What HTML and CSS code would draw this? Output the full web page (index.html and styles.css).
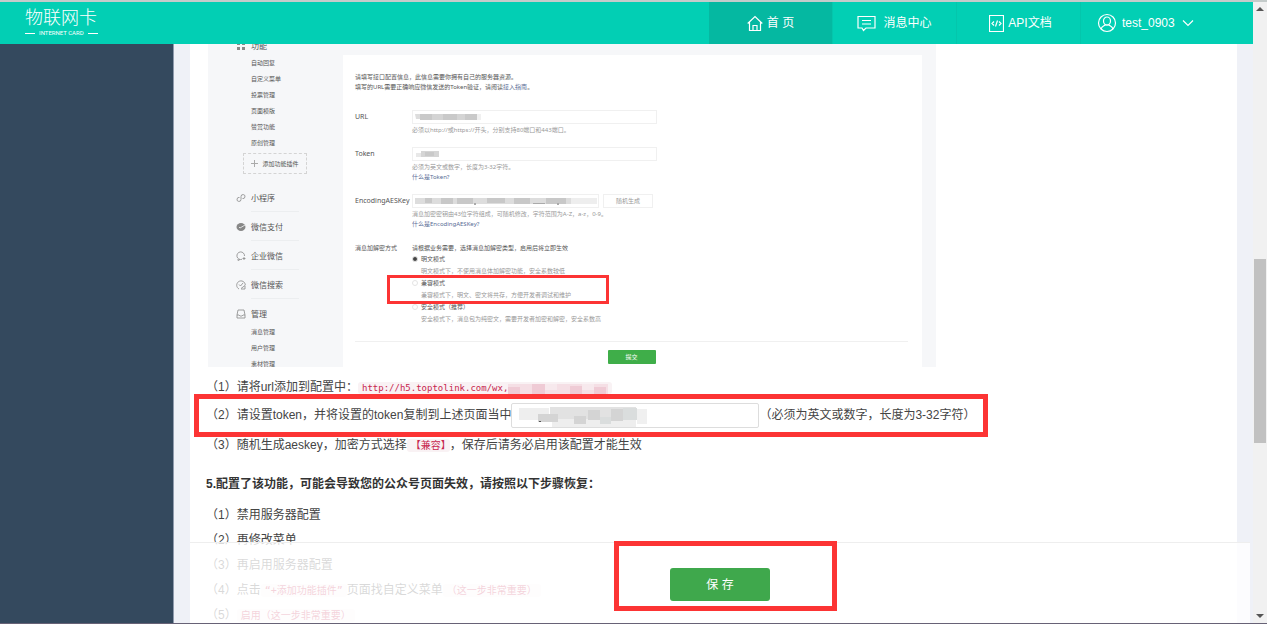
FILE: index.html
```html
<!DOCTYPE html>
<html lang="zh-CN">
<head>
<meta charset="utf-8">
<title>物联网卡</title>
<link rel="stylesheet" href="styles.css">
</head>
<body>
<div class="app">
  <header class="topbar">
    <a class="logo" href="#">
      <span class="logo-name">物联网卡</span>
      <span class="logo-sub">INTERNET CARD</span>
    </a>
    <nav class="nav">
      <a class="nav-item nav-active" href="#">
        <svg width="16" height="18" viewBox="0 0 16 18"><path d="M.7 9.500 8 2.500l7.300 7M2.500 8v8.500h11V8M6 16.500v-5h4v5"/></svg>
        <span>首 页</span>
      </a>
      <a class="nav-item nav-messages" href="#">
        <svg width="19" height="17" viewBox="0 0 19 17"><path d="M1 1.500h17v11.500H9l-2.500 2.500L5 13H1zM5 5.500h9M5 9h9"/></svg>
        <span>消息中心</span>
      </a>
      <a class="nav-item nav-api" href="#">
        <svg width="15" height="17" viewBox="0 0 15 17"><path d="M.5.5h14v16H.5zM5 6.500 3 8.500l2 2M10 6.500l2 2-2 2M8.500 5.500l-2 6"/></svg>
        <span>API文档</span>
      </a>
      <button class="nav-item nav-user" type="button">
        <svg width="20" height="20" viewBox="0 0 20 20"><circle cx="10" cy="10" r="8.500"/><ellipse cx="10" cy="8" rx="3.500" ry="4"/><path d="M4 16c1-3 3-3 4-4h4c1 1 3 1 4 4"/></svg>
        <span>test_0903</span>
        <svg class="chevron" width="12" height="8" viewBox="0 0 12 8"><path d="m1 1.500 5 5 5-5"/></svg>
      </button>
    </nav>
  </header>

  <aside class="sidebar"></aside>

  <main class="main">
    <div class="card">
      <div class="guide">
        <div class="menu">
          <div class="menu-head menu-first"><svg width="10" height="10" viewBox="0 0 10 10"><path class="solid" d="M1 1h3v3H1zM6 1h3v3H6zM1 6h3v3H1zM6 6h3v3H6z"/></svg>功能</div>
          <ul class="menu-list">
            <li>自动回复</li><li>自定义菜单</li><li>投票管理</li><li>页面模版</li><li>赞赏功能</li><li>原创管理</li>
          </ul>
          <button class="menu-add" type="button"><svg width="7" height="7" viewBox="0 0 7 7"><path d="M3.500 0v7M0 3.500h7"/></svg>添加功能插件</button>
          <div class="menu-head"><svg width="10" height="10" viewBox="0 0 10 10"><path d="M3.500 4.500a2 2 0 1 0 1.500 2V3.500a2 2 0 1 1 1.500 2"/></svg>小程序</div>
          <div class="menu-head"><svg width="10" height="10" viewBox="0 0 10 10"><ellipse class="solid" cx="5" cy="5" rx="4.500" ry="4"/><path class="tick" d="m3 5 1 1 5-3"/></svg>微信支付</div>
          <div class="menu-head"><svg width="10" height="10" viewBox="0 0 10 10"><path d="M6 8.300A3.800 3.800 0 1 1 8.500 5M2 8v1.500L4 8.500M6.500 7.500h3M8 6v3"/></svg>企业微信</div>
          <div class="menu-head"><svg width="10" height="10" viewBox="0 0 10 10"><path d="M3 9A4.300 4.300 0 1 1 9.300 5M3 4.500 4.500 6 7 3M5 8.500 9 5.500v3.500H5"/></svg>微信搜索</div>
          <div class="menu-head menu-last"><svg width="10" height="10" viewBox="0 0 10 10"><path d="M1 6 2 1h6l1 5v3H1zM1 6h2l1 1h2l1-1h2"/></svg>管理</div>
          <ul class="menu-list">
            <li>消息管理</li><li>用户管理</li><li>素材管理</li>
          </ul>
        </div>

        <form class="panel">
          <p class="intro">请填写接口配置信息，此信息需要你拥有自己的服务器资源。<br>填写的URL需要正确响应微信发送的Token验证，请阅读<a href="#">接入指南</a>。</p>
          <div class="field">
            <label class="latin" for="cfg-url">URL</label>
            <div>
              <span class="masked"><input class="box" id="cfg-url" type="text"><svg class="mask" width="72" height="12" viewBox="0 0 72 12"><path fill="#ddd" d="M2 3h5v5H3z"/><path fill="#c9c9c9" d="M7 3h12v6H7zM30 3h14v6H30zM52 3h12v6H52z"/><path fill="#d4d4d4" d="M19 3h11v6H19zM44 3h8v6h-8z"/><path fill="#f0f0f0" d="M64 3h4v6h-4z"/></svg></span>
              <p>必须以http://或https://开头，分别支持80端口和443端口。</p>
            </div>
          </div>
          <div class="field">
            <label class="latin" for="cfg-token">Token</label>
            <div>
              <span class="masked"><input class="box" id="cfg-token" type="text"><svg class="mask" width="72" height="12" viewBox="0 0 72 12"><path fill="#e8e8e8" d="M3 5h5v4H3z"/><path fill="#d5d5d5" d="M8 3h18v6H8z"/><path fill="#c9c9c9" d="M12 4h9v4h-9z"/></svg></span>
              <p>必须为英文或数字，长度为3-32字符。</p>
              <p><a href="#">什么是Token?</a></p>
            </div>
          </div>
          <div class="field">
            <label class="latin" for="cfg-key">EncodingAESKey</label>
            <div>
              <div class="key-row">
                <span class="masked"><input class="box" id="cfg-key" type="text"><svg class="mask" width="186" height="12" viewBox="0 0 186 12"><path fill="#ddd" d="M2 3h182v6H2z"/><path fill="#c8c8c8" d="M12 3h7v5h-7zM28 3h12v6H28zM44 3h16v6H44zM74 3h18v5H74zM101 3h16v6h-16zM133 3h20v6h-20z"/><path fill="#eee" d="M158 3h26v6h-26z"/><path fill="#aaa" d="M61 8h2v2h-2zM120 8h12v1h-12zM144 8h2v2h-2z"/></svg></span>
                <button class="random" type="button">随机生成</button>
              </div>
              <p>消息加密密钥由43位字符组成，可随机修改，字符范围为A-Z，a-z，0-9。</p>
              <p><a href="#">什么是EncodingAESKey?</a></p>
            </div>
          </div>
          <div class="field modes">
            <span>消息加解密方式</span>
            <div>
              <p class="dark">请根据业务需要，选择消息加解密类型，启用后将立即生效</p>
              <label class="mode"><input type="radio" name="mode" checked>明文模式</label>
              <p class="note">明文模式下，不使用消息体加解密功能，安全系数较低</p>
              <label class="mode"><input type="radio" name="mode">兼容模式</label>
              <p class="note">兼容模式下，明文、密文将共存，方便开发者调试和维护</p>
              <label class="mode"><input type="radio" name="mode">安全模式（推荐）</label>
              <p class="note">安全模式下，消息包为纯密文，需要开发者加密和解密，安全系数高</p>
            </div>
            <i class="mark mark-mode"></i>
          </div>
          <div class="panel-foot"><button class="submit" type="button">提交</button></div>
        </form>
      </div>

      <div class="steps">
        <p class="step">（1）请将url添加到配置中：<code class="url">http://h5.toptolink.com/wx,<svg width="100" height="12" viewBox="0 0 100 12"><path fill="#f5dfe5" d="M0 1h100v11H0z"/><path fill="#efcbd5" d="M0 4h12v8H0zM24 1h13v11H24zM62 3h12v9H62zM86 4h12v8H86z"/><path fill="#f7e9ed" d="M37 1h12v6H37zM74 1h12v6H74z"/></svg></code></p>
        <div class="step token-step">
          <label for="token">（2）请设置token，并将设置的token复制到上述页面当中</label>
          <span class="masked"><input class="token" id="token" type="text"><svg class="mask" width="140" height="25" viewBox="0 0 140 25"><path fill="#eee" d="M7 4h30v12H7zM40 13h84v10H40z"/><path fill="#e2e2e2" d="M38 3h86v12H38z"/><path fill="#d4d4d4" d="M26 10h20v8H26zM62 12h12v8H62zM76 6h12v10H76zM99 5h12v12H99z"/><path fill="#dadddd" d="M111 4h14v12h-14zM88 13h11v7H88z"/><path fill="#f0f0f0" d="M125 5h10v15h-10z"/><path fill="#555" d="M27 17h2v1h-2z"/></svg></span>
          <span>（必须为英文或数字，长度为3-32字符）</span>
          <i class="mark mark-token"></i>
        </div>
        <p class="step">（3）随机生成aeskey，加密方式选择<code>【兼容】</code>，保存后请务必启用该配置才能生效</p>
        <h2 class="title">5.配置了该功能，可能会导致您的公众号页面失效，请按照以下步骤恢复：</h2>
        <p class="step">（1）禁用服务器配置</p>
        <p class="step">（2）再修改菜单</p>
        <p class="step">（3）再启用服务器配置</p>
        <p class="step">（4）点击<code>“+添加功能插件”</code>页面找自定义菜单<code>（这一步非常重要）</code></p>
        <p class="step">（5）<code>启用（这一步非常重要）</code></p>
      </div>
    </div>
    <div class="savebar">
      <button class="save" type="button">保 存</button>
      <i class="mark mark-save"></i>
    </div>
  </main>

  <div class="scrollbar">
    <svg width="14" height="14" viewBox="0 0 14 14"><path d="m3 9 4-4 4 4z"/></svg>
    <div class="track"><div class="thumb"></div></div>
    <svg width="14" height="14" viewBox="0 0 14 14"><path d="m3 5 4 4 4-4z"/></svg>
  </div>
</div>
</body>
</html>
```
FILE: styles.css
```css
* { box-sizing: border-box; }
body {
  margin: 0;
  font: 12px/24px "Liberation Sans", "Noto Sans CJK SC", sans-serif;
  color: #444;
}
p, ul, h2 { margin: 0; padding: 0; list-style: none; }
a { color: inherit; text-decoration: none; }
button, input { font: inherit; color: inherit; margin: 0; padding: 0; }
svg { fill: none; stroke: currentColor; flex: none; }

.app {
  display: grid;
  grid-template: 42px minmax(0, 1fr) / 174px minmax(0, 1fr) 14px;
  height: 100vh;
  border-top: 2px solid #c4cbca;
  border-bottom: 1px solid #676276;
  overflow: hidden;
}

.topbar {
  grid-column: 1 / 3;
  display: flex;
  justify-content: space-between;
  background: #02cfb4;
  color: #fff;
}
.logo { padding: 5px 0 0 25px; }
.logo-name { display: block; font-size: 18px; line-height: 22px; font-weight: 300; }
.logo-sub { display: flex; align-items: center; gap: 4px; font: 6px/8px Roboto, sans-serif; }
.logo-sub::before, .logo-sub::after { content: ""; width: 10px; height: 1px; background: #fff; }
.nav { display: flex; }
.nav-item {
  display: flex;
  align-items: center;
  justify-content: center;
  gap: 4px;
  width: 124px;
  border: 0;
  border-right: 1px solid #04c6ac;
  background: none;
}
.nav svg { stroke-width: 1.2; }
.nav-active { background: #05b8a1; }
.nav-messages { gap: 7px; }
.nav-api { padding-left: 4px; }
.nav-user { width: 172px; gap: 5px; justify-content: flex-start; padding-left: 16px; border: 0; }
.chevron { margin-left: 2px; }

.sidebar { background: #34495e; border-right: 1px solid #8f9bad; }
.main { position: relative; padding: 0 16px; background: #eff1f7; overflow: hidden; }
.card { height: 100%; padding: 0 16px 0 18px; background: #fff; }

.guide {
  display: grid;
  grid-template-columns: 135px minmax(0, 579px);
  max-width: 728px;
  height: 323px;
  background: #f6f7f9;
  font-family: "Noto Sans", "Noto Sans CJK SC", sans-serif;
  font-size: 6px;
  line-height: 10px;
  color: #555;
  overflow: hidden;
}
.menu { padding: 0 36px 0 28px; margin-top: -12px; }
.menu-head {
  position: relative;
  display: flex;
  align-items: center;
  gap: 5px;
  height: 29px;
  font-size: 8px;
}
.menu-head::after {
  content: "";
  position: absolute;
  left: 15px;
  right: 8px;
  bottom: 0;
  height: 1px;
  background: #eceef0;
}
.menu-first::after, .menu-last::after { display: none; }
.menu .solid { fill: currentColor; stroke: none; }
.menu .tick { stroke: #f6f7f9; }
.menu-head svg { color: #888; stroke-width: .8; }
.menu-first { height: 27px; }
.menu-list { padding-left: 15px; }
.menu-first + .menu-list { margin-top: -4px; }
.menu-last + .menu-list { margin-top: -4px; }
.menu-list li { height: 16px; line-height: 16px; }
.menu-add {
  display: flex;
  align-items: center;
  justify-content: center;
  gap: 4px;
  width: 64px;
  height: 21px;
  margin: 2px 0 9px 7px;
  border: 1px dashed #d4d4d4;
  background: none;
}
.menu-add svg { color: #aaa; }

.panel { margin-top: 11px; padding: 17px 14px 0 12px; background: #fff; }
.panel a { color: #576b95; }
.intro { margin-bottom: 18px; }
.field { display: grid; grid-template-columns: 57px minmax(0, 1fr); position: relative; margin-bottom: 12px; color: #999; }
.field > label, .field > span, .dark { color: #555; }
.field > label { line-height: 14px; }
.latin { font-size: 7px; }
.modes { margin-top: 14px; }
.masked { display: block; position: relative; }
.mask { position: absolute; left: 1px; top: 1px; stroke: none; pointer-events: none; }
.box { display: block; width: 245px; height: 14px; margin-bottom: 1px; border: 1px solid #f0f0f0; background: #fff; }
.key-row { display: flex; gap: 4px; }
.key-row .box { width: 187px; }
.random { width: 50px; height: 14px; border: 1px solid #f0f0f0; background: #fff; }
.mode { display: flex; align-items: center; gap: 3px; height: 12px; color: #555; }
.mode input { appearance: none; width: 6px; height: 6px; border: 1px solid #e4e4e4; border-radius: 50%; }
.mode input:checked { background: #444; }
.note { height: 12px; line-height: 12px; padding-left: 9px; }
.panel-foot { display: flex; justify-content: center; padding-top: 8px; border-top: 1px solid #f0f0f0; margin-top: 16px; }
.submit { width: 48px; height: 14px; border: 0; border-radius: 1px; background: #3fae49; color: #fff; }

.mark { position: absolute; border: 5px solid #fc3434; pointer-events: none; }
.mark-mode { left: 32px; top: 32px; width: 222px; height: 29px; border-width: 3px; }
.mark-token { left: -12px; top: -9px; width: 794px; height: 43px; }
.mark-save { left: calc(50% - 106px); top: -2px; width: 223px; height: 70px; }

.steps { margin-left: -2px; padding-top: 8px; }
.step { height: 25px; line-height: 25px; white-space: nowrap; }
.token-step { position: relative; display: flex; align-items: center; height: 25px; margin: 3px 0 5px; }
.token { display: block; width: 248px; height: 25px; border: 1px solid #ddd; border-radius: 2px; background: #fff; }
code {
  padding: 1px 4px;
  border-radius: 3px;
  background: #f9f2f4;
  color: #c7254e;
  font: 10px/12px "DejaVu Sans Mono", "Noto Sans CJK SC", monospace;
}
.url { font-size: 9px; }
code svg { vertical-align: middle; stroke: none; }
.title { margin: 14px 0 6px; font-size: 12px; line-height: 25px; color: #333; }

.savebar {
  position: absolute;
  left: 16px;
  right: 3px;
  bottom: 0;
  display: flex;
  justify-content: center;
  height: 81px;
  padding-top: 25px;
  border-top: 1px solid #eee;
  background: rgba(255, 255, 255, .8);
}
.save { width: 100px; height: 33px; border: 0; border-radius: 3px; background: #3fa84c; color: #fff; }

.scrollbar { grid-column: 3; grid-row: 1 / 3; display: flex; flex-direction: column; background: #f1f1f1; }
.scrollbar path { fill: #555; stroke: none; }
.track { display: grid; grid-template-rows: 41fr 31fr 28fr; flex: 1; padding: 0 1px; }
.thumb { grid-row: 2; background: #c1c1c1; }
```
